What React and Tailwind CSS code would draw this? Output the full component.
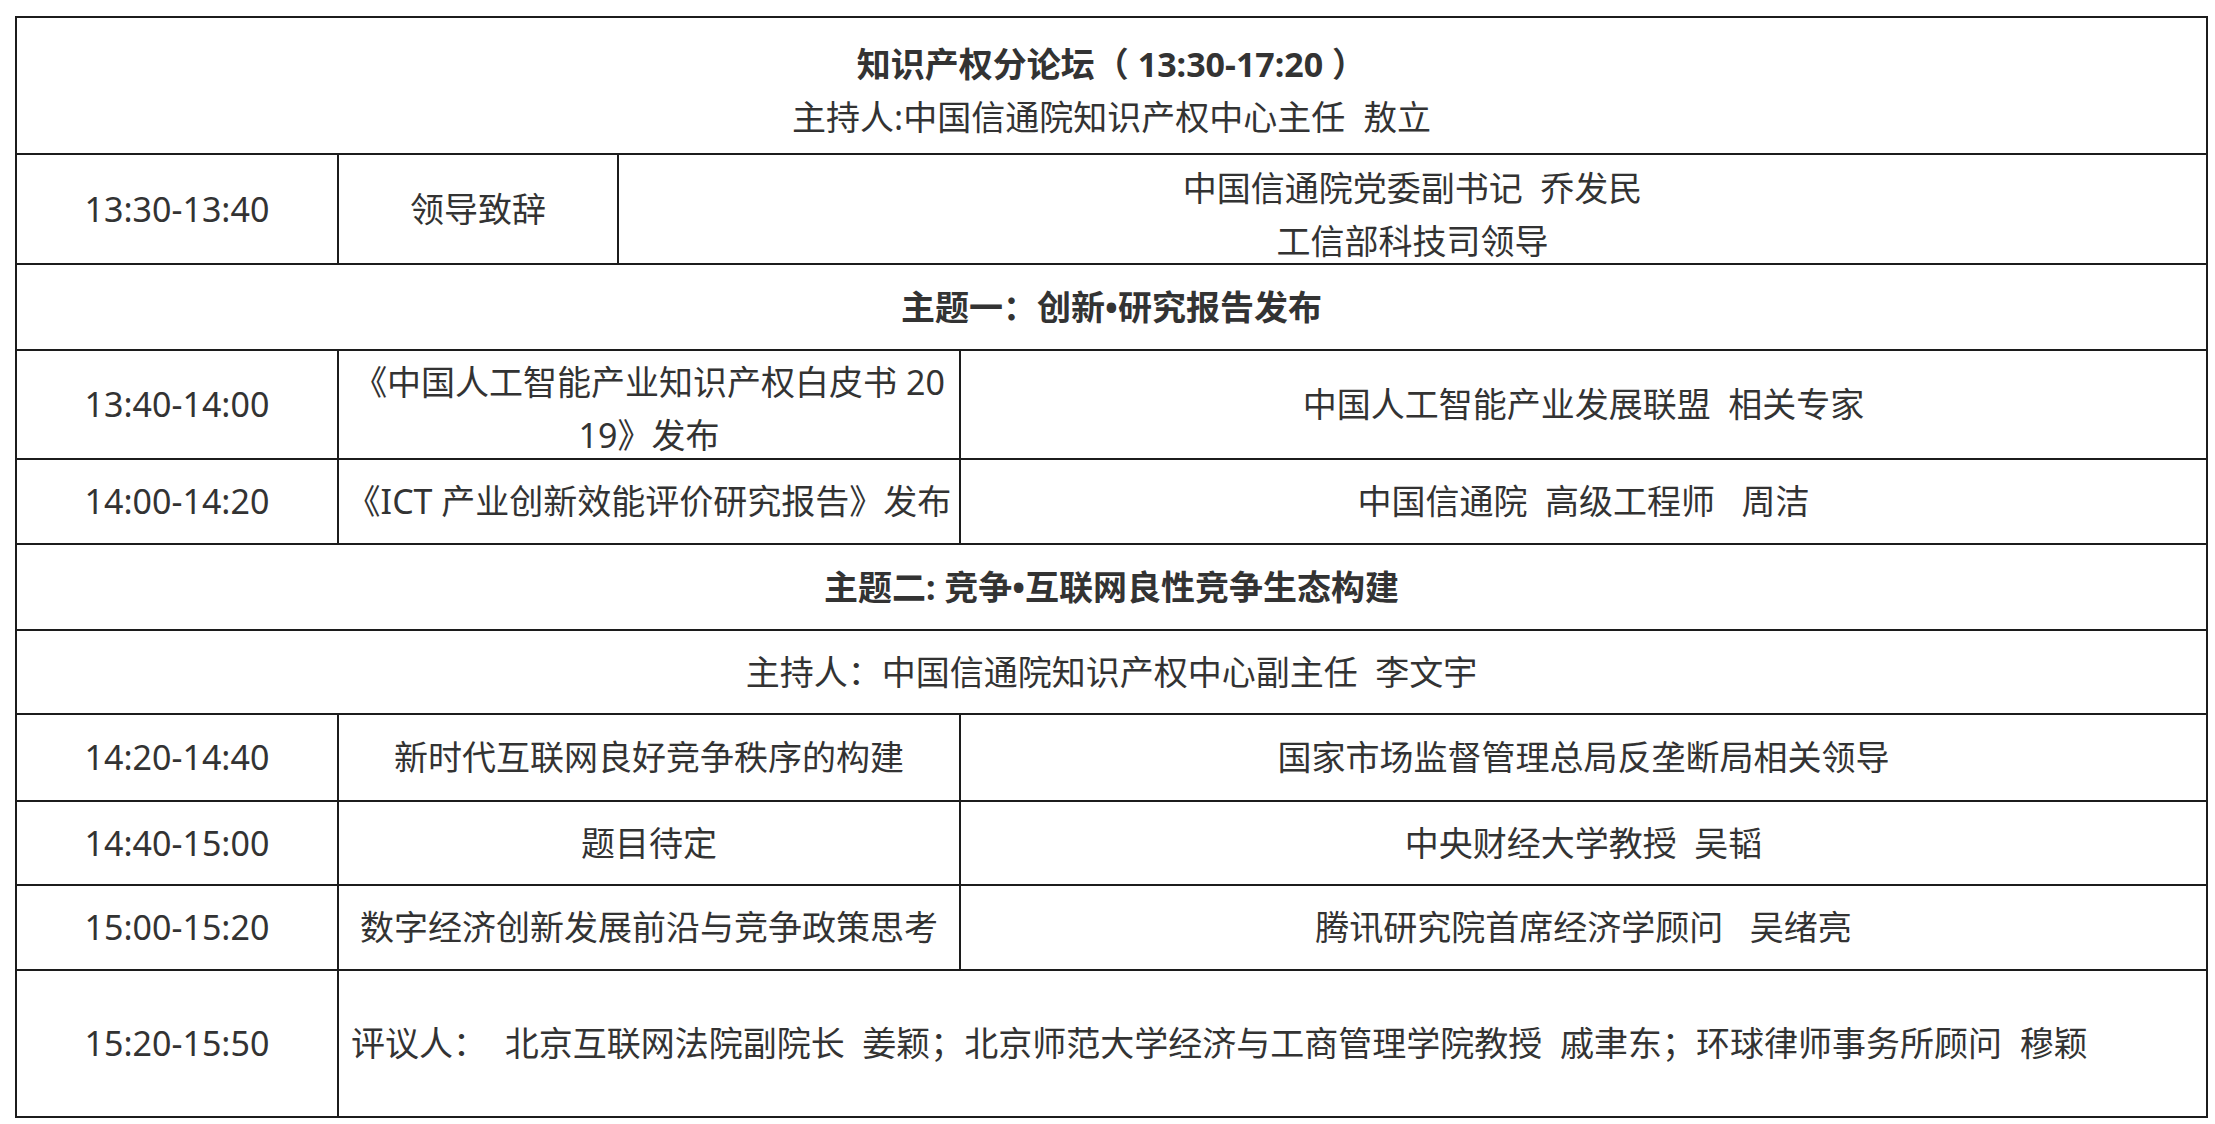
const font = "font-['Noto_Sans','Noto_Sans_CJK_SC',sans-serif]";

function Cell({ children, className = "" }) {
  return (
    <div
      className={
        "flex items-center justify-center text-center whitespace-pre border-r-2 border-b-2 border-[#1c1c1c] " +
        className
      }
    >
      {children}
    </div>
  );
}

export default function App() {
  return (
    <div className={`min-h-screen bg-white pt-[16px] pl-[15px] text-[34px] leading-[53px] text-[#333] ${font}`}>
      <div className="grid w-[2193px] grid-cols-[322px_280px_342px_1247px] grid-rows-[137px_110px_86px_109px_85px_86px_84px_87px_84px_85px_147px] border-t-2 border-l-2 border-[#1c1c1c]">
        {/* forum header */}
        <Cell className="col-span-4 flex-col pt-[10px]">
          <div className="font-bold">知识产权分论坛（ 13:30-17:20 ）</div>
          <div>主持人:中国信通院知识产权中心主任  敖立</div>
        </Cell>

        <Cell>13:30-13:40</Cell>
        <Cell>领导致辞</Cell>
        <Cell className="col-span-2 flex-col pt-[12px]">
          <div>中国信通院党委副书记  乔发民</div>
          <div>工信部科技司领导</div>
        </Cell>

        <Cell className="col-span-4 font-bold">主题一：创新•研究报告发布</Cell>

        <Cell>13:40-14:00</Cell>
        <Cell className="col-span-2 flex-col pt-[9px]">
          <div>《中国人工智能产业知识产权白皮书 20</div>
          <div>19》发布</div>
        </Cell>
        <Cell>中国人工智能产业发展联盟  相关专家</Cell>

        <Cell>14:00-14:20</Cell>
        <Cell className="col-span-2">《ICT 产业创新效能评价研究报告》发布</Cell>
        <Cell>中国信通院  高级工程师   周洁</Cell>

        <Cell className="col-span-4 font-bold">主题二: 竞争•互联网良性竞争生态构建</Cell>

        <Cell className="col-span-4">主持人：中国信通院知识产权中心副主任  李文宇</Cell>

        <Cell>14:20-14:40</Cell>
        <Cell className="col-span-2">新时代互联网良好竞争秩序的构建</Cell>
        <Cell>国家市场监督管理总局反垄断局相关领导</Cell>

        <Cell>14:40-15:00</Cell>
        <Cell className="col-span-2">题目待定</Cell>
        <Cell>中央财经大学教授  吴韬</Cell>

        <Cell>15:00-15:20</Cell>
        <Cell className="col-span-2">数字经济创新发展前沿与竞争政策思考</Cell>
        <Cell>腾讯研究院首席经济学顾问   吴绪亮</Cell>

        <Cell>15:20-15:50</Cell>
        <Cell className="col-span-3 !justify-start pl-[12px]">
          评议人：  北京互联网法院副院长  姜颖；北京师范大学经济与工商管理学院教授  戚聿东；环球律师事务所顾问  穆颖
        </Cell>
      </div>
    </div>
  );
}
